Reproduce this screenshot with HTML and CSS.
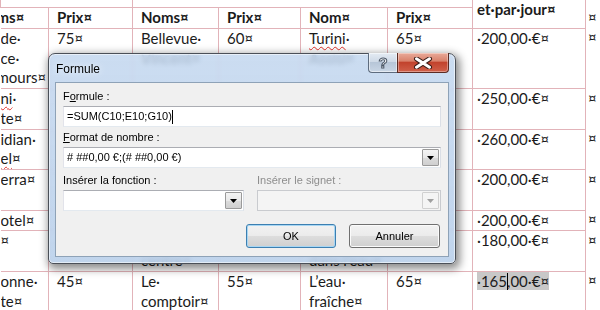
FILE: index.html
```html
<!DOCTYPE html>
<html lang="fr">
<head>
  <meta charset="UTF-8" />
  <title>Formule</title>
  <link rel="stylesheet" href="styles.css">
</head>
<body>
  <table class="grid">
    <colgroup>
      <col class="c-first">
      <col class="c-prix1">
      <col class="c-noms">
      <col class="c-prix2">
      <col class="c-nom">
      <col class="c-prix3">
      <col class="c-total">
      <col class="c-mark">
    </colgroup>
    <tr class="r0">
      <td colspan="2"></td>
      <td colspan="4"></td>
      <td rowspan="2" class="total head">et·par·jour¤</td>
      <td class="mark"></td>
    </tr>
    <tr class="head">
      <td class="first"><span class="cut">ms¤</span></td>
      <td>Prix¤</td>
      <td>Noms¤</td>
      <td>Prix¤</td>
      <td>Nom¤</td>
      <td>Prix¤</td>
      <td class="mark">¤</td>
    </tr>
    <tr>
      <td class="first">de·<br>ce·<br><span class="cut">mours¤</span></td>
      <td>75¤</td>
      <td>Bellevue·<br>Vincent¤</td>
      <td>60¤</td>
      <td><span class="typo">Turini</span>·<br>Assisi¤</td>
      <td>65¤</td>
      <td class="total">·200,00·€¤</td>
      <td class="mark">¤</td>
    </tr>
    <tr>
      <td class="first"><span class="typo">ni</span>·<br>te¤</td>
      <td>80¤</td>
      <td>Le·<br>Negresco¤</td>
      <td>70¤</td>
      <td>Palais·<br>Maeterlinck¤</td>
      <td>100¤</td>
      <td class="total">·250,00·€¤</td>
      <td class="mark">¤</td>
    </tr>
    <tr>
      <td class="first">idian·<br><span class="typo">el</span>¤</td>
      <td>90¤</td>
      <td>Hôtel·<br>Windsor¤</td>
      <td>85¤</td>
      <td>Hôtel·<br>Ellington¤</td>
      <td>85¤</td>
      <td class="total">·260,00·€¤</td>
      <td class="mark">¤</td>
    </tr>
    <tr>
      <td class="first">erra¤</td>
      <td>70¤</td>
      <td>Villa·<br>Victoria¤</td>
      <td>65¤</td>
      <td>Hôtel·<br>Vendôme¤</td>
      <td>65¤</td>
      <td class="total">·200,00·€¤</td>
      <td class="mark">¤</td>
    </tr>
    <tr>
      <td class="first">otel¤</td>
      <td>60¤</td>
      <td>Ibis¤</td>
      <td>70¤</td>
      <td>Aston¤</td>
      <td>70¤</td>
      <td class="total">·200,00·€¤</td>
      <td class="mark">¤</td>
    </tr>
    <tr>
      <td class="first">¤</td>
      <td>60¤</td>
      <td>Hôtel·du·<br>centre¤</td>
      <td>60¤</td>
      <td>Hôtel·<br>dans·l’eau¤</td>
      <td>60¤</td>
      <td class="total">·180,00·€¤</td>
      <td class="mark">¤</td>
    </tr>
    <tr>
      <td class="first">onne·<br>te¤</td>
      <td>45¤</td>
      <td>Le·<br>comptoir¤</td>
      <td>55¤</td>
      <td>L’eau·<br>fraîche¤</td>
      <td>65¤</td>
      <td class="total"><span class="sel">·165<span class="ibeam"></span>,00·€¤</span></td>
      <td class="mark">¤</td>
    </tr>
  </table>

  <!-- Word "Formule" dialog over the table -->
  <div class="dlg">
    <div class="dlg-bar">
      <span class="dlg-caption">Formule</span>
      <div class="cap-btns">
        <span class="cap help">?</span>
        <span class="cap close">
          <svg width="22" height="12" viewBox="0 0 22 12">
            <path d="M4.5 1.8 L17.5 10.2 M17.5 1.8 L4.5 10.2" stroke="#3b1d18" stroke-width="5" stroke-linecap="round" fill="none"/>
            <path d="M4.5 1.8 L17.5 10.2 M17.5 1.8 L4.5 10.2" stroke="#fff" stroke-width="3" stroke-linecap="round" fill="none"/>
          </svg>
        </span>
      </div>
    </div>
    <div class="dlg-body">
      <label class="lbl">F<u>o</u>rmule :</label>
      <div class="field">=SUM(C10;E10;G10)<span class="caret"></span></div>

      <label class="lbl gap"><u>F</u>ormat de nombre :</label>
      <div class="combo">
        <span class="val"># ##0,00 €;(# ##0,00 €)</span>
        <span class="drop"><svg width="7" height="4" viewBox="0 0 7 4"><path d="M0 0h7L3.5 4z" fill="#000"/></svg></span>
      </div>

      <div class="pair">
        <div>
          <label class="lbl">Insérer la fonction :</label>
          <div class="combo">
            <span class="val"></span>
            <span class="drop"><svg width="7" height="4" viewBox="0 0 7 4"><path d="M0 0h7L3.5 4z" fill="#000"/></svg></span>
          </div>
        </div>
        <div class="off">
          <label class="lbl">Insérer le signet :</label>
          <div class="combo">
            <span class="val"></span>
            <span class="drop"><svg width="7" height="4" viewBox="0 0 7 4"><path d="M0 0h7L3.5 4z" fill="#a0a0a0"/></svg></span>
          </div>
        </div>
      </div>

      <div class="actions">
        <button class="btn default" type="button">OK</button>
        <button class="btn" type="button">Annuler</button>
      </div>
    </div>
  </div>
</body>
</html>
```

FILE: styles.css
```css
body {
  margin: 0;
  width: 600px;
  height: 310px;
  overflow: hidden;
  position: relative;
  background: #fff;
  font-family: Lato, "Liberation Sans", sans-serif;
}

/* Word table */
.grid {
  border-collapse: collapse;
  table-layout: fixed;
  width: 600px;
  font-size: 15px;
  line-height: 19.75px;
  color: #1b1b1b;
}
.c-first { width: 48px; }
.c-prix1 { width: 84px; }
.c-noms { width: 86px; }
.c-prix2 { width: 82px; }
.c-nom { width: 87px; }
.c-prix3 { width: 85px; }
.c-total { width: 113px; }
.c-mark { width: 15px; }

.grid td {
  border: 1px solid #e2b3b9;
  padding: 0 4px 0 8px;
  vertical-align: top;
  white-space: nowrap;
  overflow: hidden;
}
.grid .r0 td {
  height: 7px;
  padding: 0;
  border-top: none;
}
.grid td.first {
  border-left: none;
  padding-left: 0;
}
.grid td.total {
  padding-left: 4px;
}
.grid td.head,
.grid tr.head td {
  font-weight: bold;
}
.grid tr.head td.mark {
  font-weight: normal;
}
.grid td.mark {
  border: none;
  padding: 0 0 0 2px;
}
.cut {
  display: inline-block;
  margin-left: -4px;
}
.typo {
  text-decoration: underline wavy #e0302a;
  text-decoration-thickness: 1px;
  text-underline-offset: 2px;
}
.sel {
  background: #c8c8c8;
}
.ibeam {
  display: inline-block;
  width: 1px;
  height: 17px;
  margin: 0 -1px -3px 0;
  background: #000;
}

/* dialog */
.dlg {
  position: absolute;
  left: 48px;
  top: 53px;
  width: 408px;
  height: 211px;
  box-sizing: border-box;
  border: 1px solid #4b5058;
  border-radius: 7px 7px 5px 5px;
  background: linear-gradient(180deg, rgba(192, 213, 238, 0.82), rgba(184, 207, 234, 0.88));
  backdrop-filter: blur(2.5px);
  box-shadow: 2px 3px 9px 2px rgba(0, 0, 0, 0.45), inset 0 0 0 1px rgba(255, 255, 255, 0.55);
  font-family: "Liberation Sans", Arial, sans-serif;
  font-size: 11px;
  color: #000;
}
.dlg-bar {
  height: 28px;
  display: flex;
  justify-content: space-between;
  align-items: flex-start;
}
.dlg-caption {
  padding: 8px 0 0 7px;
  font-size: 12px;
  text-shadow: 0 0 6px rgba(255, 255, 255, 0.9);
}
.cap-btns {
  display: flex;
  margin: -1px 6px 0 0;
}
.cap {
  height: 20px;
  box-sizing: border-box;
  display: flex;
  align-items: center;
  justify-content: center;
}
.help {
  width: 29px;
  border: 1px solid #5e6c7e;
  border-top: none;
  border-right: none;
  border-radius: 0 0 0 4px;
  background: linear-gradient(180deg, #e4ebf3 0%, #cfdae7 45%, #b7c6d8 50%, #c9d6e5 100%);
  box-shadow: inset 0 0 0 1px rgba(255, 255, 255, 0.5);
  color: #fff;
  font-size: 15px;
  font-weight: bold;
  -webkit-text-stroke: 1px #4c5868;
}
.close {
  width: 52px;
  border: 1px solid #5b2b23;
  border-top: none;
  border-radius: 0 0 4px 0;
  background: linear-gradient(180deg, #e9aa99 0%, #d9826c 42%, #c2432d 50%, #d0604a 100%);
  box-shadow: inset 0 0 0 1px rgba(255, 255, 255, 0.35);
}
.dlg-body {
  margin: 0 6px;
  height: 175px;
  box-sizing: border-box;
  border: 1px solid #8ea2b7;
  background: #f0f0f0;
  padding: 6px 7px 0;
  display: flex;
  flex-direction: column;
}
.lbl {
  display: block;
  line-height: 15px;
  height: 15px;
  margin-bottom: 2px;
}
.lbl.gap {
  margin-top: 3px;
}
.field,
.combo {
  height: 21px;
  box-sizing: border-box;
  border: 1px solid;
  border-color: #abadb3 #dbdfe6 #e3e9ef #e2e3ea;
  background: #fff;
  display: flex;
  align-items: center;
  padding-left: 3px;
  line-height: 19px;
}
.caret {
  display: inline-block;
  width: 1px;
  height: 14px;
  background: #000;
}
.combo {
  justify-content: space-between;
  padding-right: 1px;
}
.drop {
  width: 17px;
  height: 17px;
  box-sizing: border-box;
  border: 1px solid #9a9a9a;
  border-radius: 1px;
  background: linear-gradient(180deg, #f4f4f4 0%, #e9e9e9 50%, #dcdcdc 51%, #cfcfcf 100%);
  display: flex;
  align-items: center;
  justify-content: center;
}
.pair {
  display: grid;
  grid-template-columns: 181px 1fr;
  column-gap: 13px;
  margin-top: 5px;
}
.off .lbl {
  color: #8d8d8d;
}
.off .combo {
  background: #f4f4f4;
  border-color: #c9cbcf;
}
.off .drop {
  border-color: #d0d0d0;
  background: #f4f4f4;
}
.actions {
  display: flex;
  justify-content: flex-end;
  gap: 13px;
  margin: 13px 1px 0 0;
}
.btn {
  width: 91px;
  height: 24px;
  border: 1px solid #707070;
  border-radius: 3px;
  background: linear-gradient(180deg, #f2f2f2 0%, #ebebeb 50%, #dddddd 51%, #cfcfcf 100%);
  box-shadow: inset 0 0 0 1px #fbfbfb;
  font-family: "Liberation Sans", Arial, sans-serif;
  font-size: 11px;
  color: #000;
  padding: 0;
}
.btn.default {
  width: 90px;
  border-color: #3c7fb1;
  box-shadow: inset 0 0 0 1px #a7d6f3;
}
```
